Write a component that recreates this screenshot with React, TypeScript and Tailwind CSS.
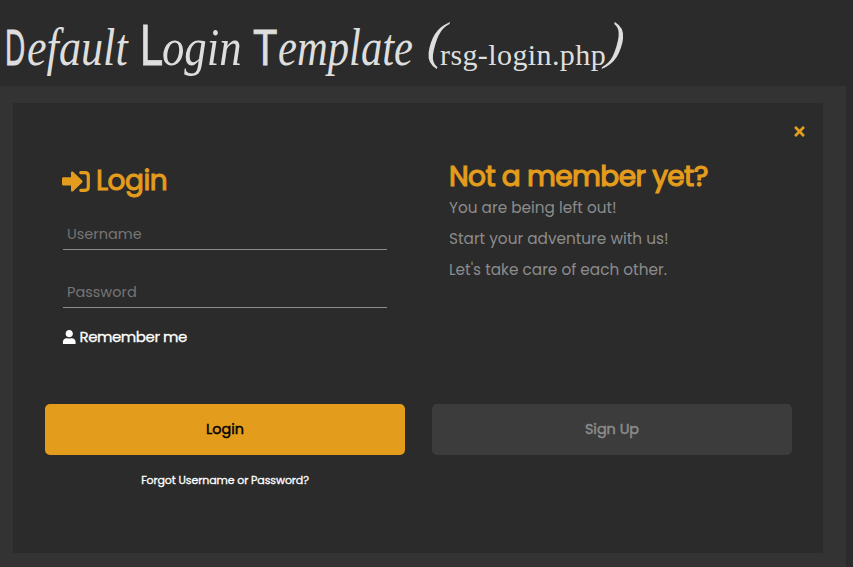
import { FaTimes, FaUser } from "react-icons/fa";

function Initial({ children, className }: { children: string; className: string }) {
  return (
    <span className={`block shrink-0 origin-bottom-left font-['Liberation_Sans',sans-serif] font-normal [-webkit-text-stroke:0.8px_#dedede] ${className}`}>
      {children}
    </span>
  );
}

function Script({ children, className }: { children: string; className: string }) {
  return <span className={`block shrink-0 origin-left text-[52px] italic ${className}`}>{children}</span>;
}

function Title() {
  return (
    <h1 className="flex h-[86px] items-baseline whitespace-nowrap pl-[5px] font-['Liberation_Serif',serif] text-[50px] leading-[90px] text-[#dedede]">
      <Initial className="w-[22px] scale-x-[0.56]">D</Initial>
      <Script className="w-[113px] scale-x-[0.85]">efault</Script>
      <Initial className="w-[22px] scale-x-[0.72] text-[58px]">L</Initial>
      <Script className="w-[91px] scale-x-[0.86]">ogin</Script>
      <Initial className="w-[25px] scale-x-[0.8] text-[50px]">T</Initial>
      <Script className="w-[150px] scale-x-[0.82]">emplate</Script>
      <span className="block w-[12px] shrink-0 -translate-y-[7px] -skew-x-6 text-[52px] italic">(</span>
      <span className="block w-[167px] shrink-0 text-[30px] tracking-[0.4px]">rsg-login.php</span>
      <span className="block -translate-y-[7px] -skew-x-6 text-[52px] italic">)</span>
    </h1>
  );
}

function SignInIcon() {
  return (
    <svg width="28" height="21" viewBox="0 0 28 21" fill="currentColor" stroke="none" className="-ml-px">
      <path d="M1.4 6.3H9V1.6C9 .4 10.3 0 11.1.8L20.2 9.6Q21 10.5 20.2 11.4L11.1 20.2C10.3 21 9 20.6 9 19.4V14.6H1.4Q0 14.6 0 13.2V7.7Q0 6.3 1.4 6.3Z" />
      <path d="M18.8 1.7H23Q26.3 1.7 26.3 5V16Q26.3 19.3 23 19.3H18.8" fill="none" stroke="currentColor" strokeWidth="3.2" strokeLinecap="round" />
    </svg>
  );
}

function Field({ label, type }: { label: string; type: string }) {
  return (
    <input
      type={type}
      placeholder={label}
      className="block h-[33px] w-[324px] border-b border-[#8b8b8b] bg-transparent px-1 pt-[3px] text-[14.5px] text-[#8b8b8b] outline-none placeholder:text-[#757575]"
    />
  );
}

export default function App() {
  return (
    <div className="h-[567px] w-[853px] overflow-hidden bg-[#2b2b2b] font-['Poppins','Inter',sans-serif]">
      <Title />
      <main className="h-[481px] w-[846px] bg-[#333333] pl-[13px] pt-[17px]">
        <section className="h-[450px] w-[810px] bg-[#2b2b2b]">
          <div className="flex h-[59px] justify-end pr-[16px] pt-[20px]">
            <button className="h-4 text-[#e39c1c]" aria-label="Close">
              <FaTimes size={15} />
            </button>
          </div>
          <div className="flex h-[242px] pl-[50px]">
            <form className="w-[386px]">
              <h2 className="flex h-[38px] items-center gap-[6px] text-[28px] leading-[38px] tracking-[-0.5px] text-[#e39c1c] [-webkit-text-stroke:1px_#e39c1c]">
                <SignInIcon />
                Login
              </h2>
              <div className="mt-[17px] flex flex-col gap-[25px]">
                <Field label="Username" type="text" />
                <Field label="Password" type="password" />
              </div>
              <div className="mt-[19px] flex items-center gap-[3px] text-[15px] leading-5 tracking-[-0.45px] text-white [-webkit-text-stroke:0.3px_#fff]">
                <FaUser size={14.5} className="-ml-px" />
                Remember me
              </div>
            </form>
            <div className="text-[#8b8b8b]">
              <h2 className="h-[30px] text-[28px] leading-[30px] tracking-[-0.6px] text-[#e39c1c] [-webkit-text-stroke:1.2px_#e39c1c]">
                Not a member yet?
              </h2>
              <div className="flex flex-col text-[15.3px] leading-[31px]">
                <p>You are being left out!</p>
                <p>Start your adventure with us!</p>
                <p>Let's take care of each other.</p>
              </div>
            </div>
          </div>
          <div className="flex gap-[27px] pl-[32px] text-[14.4px]">
            <div className="flex w-[360px] flex-col items-center">
              <button className="h-[51px] w-full rounded-[5px] bg-[#e39c1c] text-black [-webkit-text-stroke:0.4px_#000]">Login</button>
              <a className="mt-[17px] text-[11px] leading-4 tracking-[-0.1px] text-white [-webkit-text-stroke:0.3px_#fff]">Forgot Username or Password?</a>
            </div>
            <button className="h-[51px] w-[360px] rounded-[5px] bg-[#3c3c3c] text-[#8b8b8b] [-webkit-text-stroke:0.5px_#8b8b8b]">Sign Up</button>
          </div>
        </section>
      </main>
    </div>
  );
}
